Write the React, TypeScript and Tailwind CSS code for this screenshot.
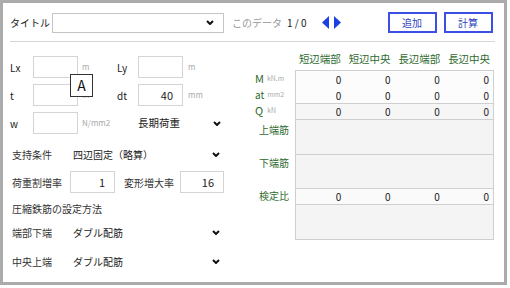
import React from 'react';

const font = { fontFamily: '"Noto Sans CJK JP", "Noto Sans", sans-serif' };

const Chevron: React.FC = () => (
  <svg width="8" height="5" viewBox="0 0 8 5" className="shrink-0">
    <polyline points="1,1 4,4 7,1" fill="none" stroke="#111" strokeWidth="2" />
  </svg>
);

const Box: React.FC<{ value?: string; w?: string }> = ({ value, w = 'w-[45px]' }) => (
  <div className={`${w} h-[22px] border border-[#d4d4d4] bg-white flex items-center justify-end pr-[9px] text-[11px] text-[#222]`}>
    {value}
  </div>
);

const SelectRow: React.FC<{ label: string; value: string; className?: string }> = ({ label, value, className }) => (
  <div className={`flex items-center h-[22px] pl-[2px] w-[210px] ${className ?? ''}`}>
    <span className="w-[61px] text-[10px] text-[#333]">{label}</span>
    <span className="flex-1 text-[10px] text-[#222]">{value}</span>
    <Chevron />
  </div>
);

const cols = ['短辺端部', '短辺中央', '長辺端部', '長辺中央'];

const ZeroRow: React.FC<{ bg: string; border?: boolean }> = ({ bg, border }) => (
  <div className={`grid grid-cols-4 h-[16px] items-center ${bg} ${border ? 'border-t border-[#cfcfcf]' : ''}`}>
    {cols.map((c) => (
      <span key={c} className="text-right pr-[4px] text-[10px] text-[#222]">0</span>
    ))}
  </div>
);

export default function App() {
  return (
    <div className="w-[510px] h-[288px] bg-white" style={font}>
      <div className="w-[507px] h-[285px] border-[3px] border-[#ababab] bg-white flex flex-col">
        {/* Header */}
        <div className="flex items-center pt-[9px] pl-[7px] h-[30px]">
          <span className="w-[42px] text-[10px] text-[#222]">タイトル</span>
          <div className="w-[172px] h-[20px] border border-[#c4c4c4] flex items-center justify-end pr-[9px]">
            <Chevron />
          </div>
          <span className="ml-[8px] text-[10px] text-[#999]">このデータ</span>
          <span className="ml-[5px] text-[10px] text-[#222]">1 / 0</span>
          <div className="ml-[15px] flex items-center gap-[5px]">
            <svg width="7" height="13" viewBox="0 0 7 13"><polygon points="7,0 0,6.5 7,13" fill="#1d3fe6" /></svg>
            <svg width="7" height="13" viewBox="0 0 7 13"><polygon points="0,0 7,6.5 0,13" fill="#1d3fe6" /></svg>
          </div>
          <button className="ml-[47px] w-[49px] h-[21px] border-2 border-[#3b4fe4] text-[10px] text-[#2f3fbf]">追加</button>
          <button className="ml-[7px] w-[49px] h-[21px] border-2 border-[#3b4fe4] text-[10px] text-[#2f3fbf]">計算</button>
        </div>
        <div className="ml-[7px] mt-[8px] w-[485px] h-px bg-[#d6d6d6]" />

        {/* Body */}
        <div className="flex">
          {/* Left column */}
          <div className="pl-[7px] w-[252px] relative">
            <div className="flex items-center mt-[14px]">
              <span className="w-[23px] text-[10px] text-[#222]">Lx</span>
              <Box />
              <span className="w-[39px] pl-[4px] text-[8px] text-[#aaa]">m</span>
              <span className="w-[21px] text-[10px] text-[#222]">Ly</span>
              <Box />
              <span className="pl-[5px] text-[8px] text-[#aaa]">m</span>
            </div>
            <div className="flex items-center mt-[6px]">
              <span className="w-[23px] text-[10px] text-[#222]">t</span>
              <Box />
              <span className="w-[39px] pl-[4px] text-[8px] text-[#aaa]">m</span>
              <span className="w-[21px] text-[10px] text-[#222]">dt</span>
              <Box value="40" />
              <span className="pl-[5px] text-[8px] text-[#aaa]">mm</span>
            </div>
            <div className="flex items-center mt-[6px]">
              <span className="w-[23px] text-[10px] text-[#222]">w</span>
              <Box />
              <span className="w-[60px] pl-[4px] text-[8px] text-[#aaa]">N/mm2</span>
              <span className="w-[75px] text-[10.5px] text-[#222]">長期荷重</span>
              <Chevron />
            </div>

            <SelectRow label="支持条件" value="四辺固定（略算）" className="mt-[9px]" />

            <div className="flex items-center mt-[6px] pl-[2px]">
              <span className="w-[58px] text-[10px] text-[#333]">荷重割増率</span>
              <Box value="1" />
              <span className="w-[65px] pl-[9px] text-[10px] text-[#333]">変形増大率</span>
              <Box value="16" w="w-[44px]" />
            </div>

            <div className="mt-[7px] h-[16px] pl-[2px] flex items-center text-[10px] text-[#333]">圧縮鉄筋の設定方法</div>

            <SelectRow label="端部下端" value="ダブル配筋" className="mt-[5px]" />
            <SelectRow label="中央上端" value="ダブル配筋" className="mt-[7px]" />

            {/* Tooltip */}
            <div className="absolute left-[67px] top-[32px] w-[23px] h-[23px] border-[1.5px] border-[#333] bg-white flex items-center justify-center text-[14px] text-[#111]">
              A
            </div>
          </div>

          {/* Right column */}
          <div className="flex-1 pt-[10px]">
            <div className="flex h-[14px] items-center">
              <div className="w-[40px]" />
              <div className="w-[199px] grid grid-cols-4">
                {cols.map((c) => (
                  <span key={c} className="text-center text-[10.5px] text-[#2f6b2f]">{c}</span>
                ))}
              </div>
            </div>
            <div className="flex mt-[4px]">
              {/* labels */}
              <div className="w-[40px] flex flex-col">
                <div className="h-[16px] flex items-center gap-[3px]"><span className="text-[11px] text-[#2f6b2f]">M</span><span className="text-[7px] text-[#aaa]">kN.m</span></div>
                <div className="h-[16px] flex items-center gap-[3px]"><span className="text-[10px] text-[#2f6b2f]">at</span><span className="text-[7px] text-[#aaa]">mm2</span></div>
                <div className="h-[16px] flex items-center gap-[4px]"><span className="text-[11px] text-[#2f6b2f]">Q</span><span className="text-[7px] text-[#aaa]">kN</span></div>
                <div className="h-[35px] pt-[4px] pl-[4px] text-[10px] text-[#2f6b2f]">上端筋</div>
                <div className="h-[34px] pt-[2px] pl-[4px] text-[10px] text-[#2f6b2f]">下端筋</div>
                <div className="h-[16px] pl-[4px] flex items-center text-[10px] text-[#2f6b2f]">検定比</div>
              </div>
              {/* table */}
              <div className="w-[199px] border border-[#cfcfcf] flex flex-col">
                <ZeroRow bg="bg-[#fcfcfc]" />
                <ZeroRow bg="bg-[#fcfcfc]" />
                <ZeroRow bg="bg-[#f6f6f6]" border />
                <div className="h-[35px] border-t border-[#cfcfcf] bg-[#f4f4f4]" />
                <div className="h-[34px] border-t border-[#cfcfcf] bg-[#f4f4f4]" />
                <ZeroRow bg="bg-[#fafafa]" border />
                <div className="h-[35px] border-t border-[#cfcfcf] bg-[#f4f4f4]" />
              </div>
            </div>
          </div>
        </div>
      </div>
    </div>
  );
}
